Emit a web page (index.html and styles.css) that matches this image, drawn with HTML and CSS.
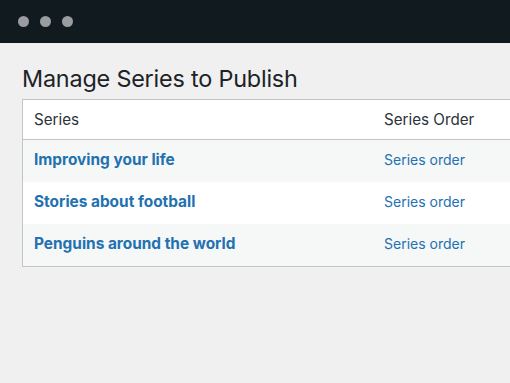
FILE: index.html
```html
<!DOCTYPE html>
<html>
<head>
<meta charset="utf-8">
<link rel="stylesheet" href="styles.css">
</head>
<body>
<div class="titlebar">
  <span class="dot"></span><span class="dot"></span><span class="dot"></span>
</div>
<main class="content">
  <h1 class="title">Manage Series to Publish</h1>
  <div class="table">
    <div class="row head">
      <div class="c1">Series</div>
      <div class="c2">Series Order</div>
    </div>
    <div class="row alt">
      <div class="c1"><a class="name">Improving your life</a></div>
      <div class="c2"><a class="order">Series order</a></div>
    </div>
    <div class="row">
      <div class="c1"><a class="name">Stories about football</a></div>
      <div class="c2"><a class="order">Series order</a></div>
    </div>
    <div class="row alt">
      <div class="c1"><a class="name">Penguins around the world</a></div>
      <div class="c2"><a class="order">Series order</a></div>
    </div>
  </div>
</main>
</body>
</html>
```
FILE: styles.css
```css
html, body {
  margin: 0;
  padding: 0;
  width: 510px;
  height: 383px;
  overflow: hidden;
  background: #f0f0f1;
  font-family: Inter, "Noto Sans", "Liberation Sans", sans-serif;
}
.titlebar {
  height: 43px;
  background: #111a1f;
  display: flex;
  align-items: center;
  gap: 11px;
  padding-left: 18px;
  box-sizing: border-box;
}
.dot {
  width: 11px;
  height: 11px;
  border-radius: 50%;
  background: #9a9d9f;
}
.content {
  padding: 22px 0 0 22px;
}
.title {
  margin: 0 0 6px 0;
  font-size: 23.4px;
  font-weight: 400;
  line-height: 28px;
  color: #1d2327;
  letter-spacing: -0.2px;
}
.table {
  border: 1px solid #c3c4c7;
  border-right: none;
  background: #fff;
}
.row {
  display: flex;
  align-items: center;
  height: 42px;
  padding-bottom: 4px;
  box-sizing: border-box;
}
.row.head {
  height: 40px;
  padding-bottom: 1px;
  border-bottom: 1px solid #c3c4c7;
  color: #2c3338;
  font-size: 15.2px;
}
.row.alt {
  background: #f6f7f7;
}
.c1 {
  width: 350px;
  padding-left: 11px;
}
.c2 {
  flex: 1;
}
.name {
  color: #2271b1;
  font-weight: 700;
  font-size: 15.4px;
}
.order {
  color: #2271b1;
  font-size: 14px;
}
```
